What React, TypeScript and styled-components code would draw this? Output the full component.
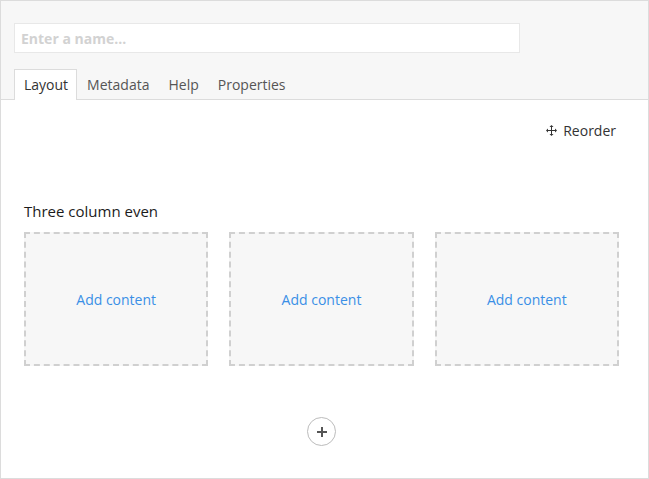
import React, { useState } from 'react';
import styled, { createGlobalStyle } from 'styled-components';

const GlobalStyle = createGlobalStyle`
  html, body {
    margin: 0;
    padding: 0;
    background: #fff;
  }
  body {
    font-family: "Open Sans", "Liberation Sans", sans-serif;
    color: #333;
  }
  * {
    box-sizing: border-box;
  }
`;

const Frame = styled.div`
  width: 649px;
  height: 479px;
  border: 1px solid #dcdcdc;
  display: flex;
  flex-direction: column;
  background: #fff;
`;

const Header = styled.div`
  background: #f7f7f7;
  border-bottom: 1px solid #dcdcdc;
  padding: 22px 13px 0;
  display: flex;
  flex-direction: column;
  gap: 16px;
`;

const NameInput = styled.input`
  width: 506px;
  height: 30px;
  border: 1px solid #e8e8e8;
  background: #fff;
  padding: 0 6px;
  font-family: inherit;
  font-size: 14px;
  font-weight: 700;
  color: #333;
  outline: none;

  &::placeholder {
    color: #d2d2d2;
  }
`;

const Tabs = styled.div`
  display: flex;
  margin-bottom: -1px;
`;

const Tab = styled.button<{ $active?: boolean }>`
  height: 31px;
  padding: 0 8px 0 9px;
  border: 1px solid ${p => (p.$active ? '#dcdcdc' : 'transparent')};
  border-bottom: none;
  background: ${p => (p.$active ? '#fff' : 'transparent')};
  color: ${p => (p.$active ? '#333' : '#555')};
  font-family: inherit;
  font-size: 14px;
  cursor: pointer;
  line-height: 30px;
`;

const Body = styled.div`
  flex: 1;
  padding: 19px 29px 0 23px;
  display: flex;
  flex-direction: column;
`;

const Toolbar = styled.div`
  display: flex;
  justify-content: flex-end;
  margin-right: 3px;
`;

const ReorderButton = styled.button`
  display: flex;
  align-items: center;
  gap: 6px;
  height: 22px;
  padding: 0;
  border: none;
  background: none;
  color: #333;
  font-family: inherit;
  font-size: 14px;
  cursor: pointer;
`;

const SectionTitle = styled.div`
  margin-top: 60px;
  margin-bottom: 11px;
  font-size: 15px;
  line-height: 20px;
  color: #1c1c1c;
`;

const Columns = styled.div`
  display: grid;
  grid-template-columns: repeat(3, 1fr);
  gap: 21px;
`;

const Slot = styled.div`
  height: 134px;
  border: 2px dashed #d0d0d0;
  background: #f7f7f7;
  display: flex;
  align-items: center;
  justify-content: center;
`;

const AddLink = styled.a`
  color: #3a8fe6;
  font-size: 14px;
  text-decoration: none;
  cursor: pointer;
`;

const AddRow = styled.div`
  display: flex;
  justify-content: center;
  margin-top: 51px;
`;

const AddButton = styled.button`
  width: 29px;
  height: 29px;
  border-radius: 50%;
  border: 1px solid #bcbcbc;
  background: #fff;
  display: flex;
  align-items: center;
  justify-content: center;
  padding: 0;
  cursor: pointer;
`;

const MoveIcon = () => (
  <svg width="11" height="11" viewBox="0 0 11 11" fill="#333">
    <rect x="5" y="1.5" width="1" height="8" />
    <rect x="1.5" y="5" width="8" height="1" />
    <polygon points="5.5,0 3.5,2 7.5,2" />
    <polygon points="5.5,11 3.5,9 7.5,9" />
    <polygon points="0,5.5 2,3.5 2,7.5" />
    <polygon points="11,5.5 9,3.5 9,7.5" />
  </svg>
);

const PlusIcon = () => (
  <svg width="10" height="10" viewBox="0 0 10 10" fill="#555">
    <rect x="4" y="0" width="2" height="10" />
    <rect x="0" y="4" width="10" height="2" />
  </svg>
);

const TABS = ['Layout', 'Metadata', 'Help', 'Properties'];

export default function App() {
  const [active, setActive] = useState('Layout');

  return (
    <>
      <GlobalStyle />
      <Frame>
        <Header>
          <NameInput placeholder="Enter a name..." />
          <Tabs>
            {TABS.map(t => (
              <Tab key={t} $active={t === active} onClick={() => setActive(t)}>
                {t}
              </Tab>
            ))}
          </Tabs>
        </Header>
        <Body>
          <Toolbar>
            <ReorderButton>
              <MoveIcon />
              Reorder
            </ReorderButton>
          </Toolbar>
          <SectionTitle>Three column even</SectionTitle>
          <Columns>
            {[0, 1, 2].map(i => (
              <Slot key={i}>
                <AddLink>Add content</AddLink>
              </Slot>
            ))}
          </Columns>
          <AddRow>
            <AddButton aria-label="Add section">
              <PlusIcon />
            </AddButton>
          </AddRow>
        </Body>
      </Frame>
    </>
  );
}
